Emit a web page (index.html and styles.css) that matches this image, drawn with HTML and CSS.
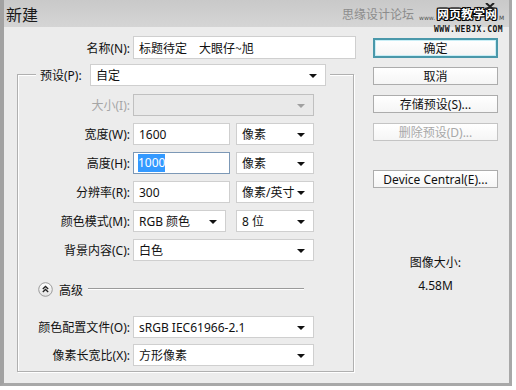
FILE: index.html
```html
<!DOCTYPE html>
<html lang="zh-CN">
<head>
<meta charset="utf-8">
<title>新建</title>
<link rel="stylesheet" href="styles.css">
</head>
<body>
<div class="window">
  <div class="titlebar">
    <span class="title">新建</span>
    <div class="watermark">
      <div class="wm-line1"><span class="wm-forum">思缘设计论坛</span><span class="wm-www">www.</span><span class="wm-site">网页教学网</span><span class="wm-m">M</span></div>
      <div class="wm-url">WWW.WEBJX.COM</div>
      <svg class="wm-close" width="10" height="7" viewBox="0 0 10 7"><path d="M1 0 L9 7 M9 0 L1 7" stroke="#222" stroke-width="2"/></svg>
    </div>
  </div>
  <div class="content">
    <div class="left">
      <div class="name-row">
        <span class="name-lbl">名称(N):</span>
        <div class="field name-field">标题待定　大眼仔~旭</div>
      </div>
      <div class="group">
        <div class="legend">
          <span class="legend-lbl">预设(P):</span>
          <div class="field select preset">自定<i class="arrow"></i></div>
        </div>
        <div class="row first">
          <span class="lbl disabled-lbl">大小(I):</span>
          <div class="field select full disabled"><i class="arrow"></i></div>
        </div>
        <div class="row">
          <span class="lbl">宽度(W):</span>
          <div class="field num">1600</div>
          <div class="field select unit">像素<i class="arrow"></i></div>
        </div>
        <div class="row">
          <span class="lbl">高度(H):</span>
          <div class="field num focus"><span class="sel-text">1000</span></div>
          <div class="field select unit">像素<i class="arrow"></i></div>
        </div>
        <div class="row">
          <span class="lbl">分辨率(R):</span>
          <div class="field num">300</div>
          <div class="field select unit">像素/英寸<i class="arrow"></i></div>
        </div>
        <div class="row">
          <span class="lbl">颜色模式(M):</span>
          <div class="field select mode">RGB 颜色<i class="arrow"></i></div>
          <div class="field select unit bits">8 位<i class="arrow"></i></div>
        </div>
        <div class="row">
          <span class="lbl">背景内容(C):</span>
          <div class="field select full">白色<i class="arrow"></i></div>
        </div>
        <div class="adv-row">
          <svg class="adv-icon" width="15" height="15" viewBox="0 0 15 15">
            <defs><linearGradient id="g" x1="0" y1="0" x2="0" y2="1"><stop offset="0" stop-color="#ffffff"/><stop offset="1" stop-color="#e2e2e2"/></linearGradient></defs>
            <circle cx="7.5" cy="7.5" r="6.8" fill="url(#g)" stroke="#9a9a9a" stroke-width="1"/>
            <path d="M4.8 7 L7.5 4.5 L10.2 7 M4.8 10 L7.5 7.5 L10.2 10" fill="none" stroke="#222" stroke-width="1.3"/>
          </svg>
          <span class="adv-text">高级</span>
          <span class="adv-line"></span>
        </div>
        <div class="row profile">
          <span class="lbl">颜色配置文件(O):</span>
          <div class="field select full">sRGB IEC61966-2.1<i class="arrow"></i></div>
        </div>
        <div class="row aspect">
          <span class="lbl">像素长宽比(X):</span>
          <div class="field select full">方形像素<i class="arrow"></i></div>
        </div>
      </div>
    </div>
    <div class="right">
      <div class="btn default">确定</div>
      <div class="btn cancel">取消</div>
      <div class="btn">存储预设(S)...</div>
      <div class="btn disabled">删除预设(D)...</div>
      <div class="btn device">Device Central(E)...</div>
      <div class="info-label">图像大小:</div>
      <div class="info-value">4.58M</div>
    </div>
  </div>
</div>
</body>
</html>
```

FILE: styles.css
```css
html, body {
  margin: 0;
  padding: 0;
  background: #ffffff;
}
body {
  width: 516px;
  height: 390px;
  overflow: hidden;
  font-family: "Noto Sans", "Noto Sans CJK SC", sans-serif;
  font-size: 12px;
  color: #111;
}
.window {
  position: relative;
  width: 512px;
  height: 386px;
  box-sizing: border-box;
  background: #ececec;
  border-left: 4px solid #a2a2a2;
  border-right: 3px solid #a8a8a8;
  border-bottom: 3px solid #a8a8a8;
}
.titlebar {
  height: 27px;
  box-sizing: border-box;
  background: linear-gradient(#c9c9c9, #d5d5d5);
  display: flex;
  align-items: center;
  padding-left: 2px;
}
.title {
  font-family: "Noto Sans CJK SC", sans-serif;
  font-size: 16px;
  color: #1a1a1a;
  line-height: 1;
}
.watermark {
  position: absolute;
  left: 338px;
  top: 5px;
  width: 170px;
  white-space: nowrap;
  font-family: "Noto Sans CJK SC", sans-serif;
}
.wm-line1 {
  display: flex;
  align-items: center;
  height: 18px;
}
.wm-forum {
  font-size: 12px;
  color: #8c8c8c;
  line-height: 1;
}
.wm-www {
  font-family: "DejaVu Sans", sans-serif;
  font-size: 6px;
  color: #555;
  margin-left: 5px;
  margin-top: 6px;
}
.wm-site {
  font-size: 12px;
  font-weight: bold;
  color: #fff;
  line-height: 1;
  margin-left: 2px;
  text-shadow: 1px 0 0 #000, -1px 0 0 #000, 0 1px 0 #000, 0 -1px 0 #000, 1px 1px 0 #000, -1px -1px 0 #000, 1px -1px 0 #000, -1px 1px 0 #000;
}
.wm-m {
  font-family: "DejaVu Sans", sans-serif;
  font-size: 6px;
  color: #444;
  margin-left: 2px;
  margin-top: 6px;
}
.wm-url {
  font-family: "DejaVu Sans Mono", monospace;
  font-size: 8px;
  font-weight: bold;
  color: #111;
  letter-spacing: 0.5px;
  margin-top: 3px;
  margin-left: 92px;
  line-height: 7px;
}
.wm-close {
  position: absolute;
  left: 143px;
  top: -2px;
}
.content {
  display: flex;
  padding-top: 9px;
}
.left {
  width: 352px;
}
.name-row {
  display: flex;
  align-items: center;
  height: 23px;
}
.name-lbl {
  width: 126px;
  text-align: right;
  margin-right: 3px;
}
.field {
  position: relative;
  box-sizing: border-box;
  height: 22px;
  background: #fff;
  border: 1px solid #cfcfcf;
  padding-left: 5px;
  display: flex;
  align-items: center;
  white-space: nowrap;
  font-size: 12px;
}
.name-field {
  width: 223px;
  height: 23px;
  font-family: "Noto Sans CJK SC", sans-serif;
}
.group {
  margin-top: 15px;
  margin-left: 13px;
  width: 337px;
  height: 298px;
  box-sizing: border-box;
  border: 1px solid #b0b0b0;
  box-shadow: inset 1px 1px 0 #fff, 1px 1px 0 #fff;
}
.legend {
  display: flex;
  align-items: center;
  width: fit-content;
  margin-top: -11px;
  margin-left: 18px;
  padding: 0 4px;
  background: #ececec;
}
.legend-lbl {
  width: 47px;
  margin-right: 3px;
}
.select {
  padding-right: 20px;
}
.arrow {
  position: absolute;
  right: 8px;
  top: 9px;
  width: 0;
  height: 0;
  border-left: 4px solid transparent;
  border-right: 4px solid transparent;
  border-top: 4px solid #111;
}
.preset {
  width: 236px;
}
.row {
  display: flex;
  align-items: center;
  height: 22px;
  margin-top: 7px;
}
.row.first {
  margin-top: 8px;
}
.lbl {
  width: 112px;
  text-align: right;
  margin-right: 3px;
}
.disabled-lbl {
  color: #a6a6a6;
}
.full {
  width: 181px;
}
.disabled {
  background: #e9e9e9;
  border-color: #c0c0c0;
}
.disabled .arrow {
  border-top-color: #a0a0a0;
}
.num {
  width: 97px;
}
.unit {
  width: 78px;
  margin-left: 6px;
}
.mode {
  width: 93px;
}
.bits {
  margin-left: 10px;
}
.focus {
  border-color: #7c98b6;
}
.sel-text {
  background: #3399ff;
  color: #fff;
  padding: 0 0 1px 0;
  margin-left: -1px;
}
.adv-row {
  display: flex;
  align-items: center;
  height: 20px;
  margin-top: 18px;
  margin-left: 20px;
}
.adv-text {
  margin-left: 6px;
  font-family: "Noto Sans CJK SC", sans-serif;
}
.adv-line {
  width: 216px;
  height: 0;
  border-top: 1px solid #9a9a9a;
  border-bottom: 1px solid #fff;
  margin-left: 5px;
}
.row.profile {
  margin-top: 17px;
}
.row.aspect {
  margin-top: 6px;
}
.right {
  margin-left: 17px;
  width: 125px;
  display: flex;
  flex-direction: column;
}
.btn {
  box-sizing: border-box;
  height: 18px;
  margin-top: 10px;
  border: 1px solid #acacac;
  background: linear-gradient(#ffffff, #f5f5f5);
  display: flex;
  align-items: center;
  justify-content: center;
  white-space: nowrap;
  font-size: 12px;
}
.btn.default {
  height: 20px;
  margin-top: 2px;
  border: 2px solid #4a98aa;
  box-shadow: inset 0 0 0 1px #c9eef6;
}
.btn.cancel {
  margin-top: 9px;
}
.btn.disabled {
  color: #a8a8a8;
  border-color: #c4c4c4;
}
.btn.device {
  margin-top: 29px;
}
.info-label {
  margin-top: 66px;
  text-align: center;
  font-family: "Noto Sans CJK SC", sans-serif;
  line-height: 16px;
}
.info-value {
  margin-top: 8px;
  text-align: center;
  line-height: 16px;
}
```
